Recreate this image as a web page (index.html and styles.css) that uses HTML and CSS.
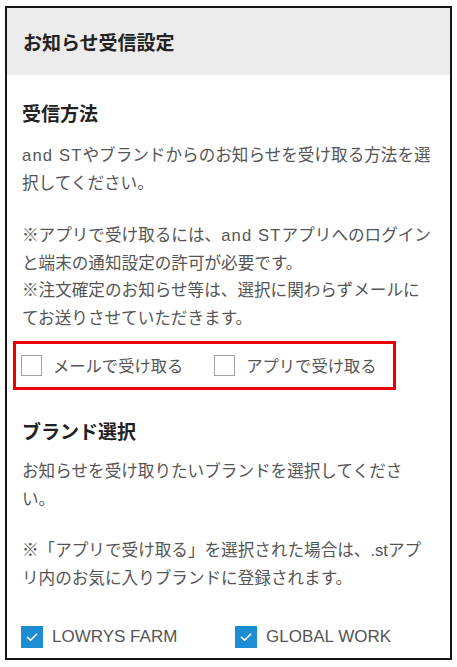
FILE: index.html
```html
<!DOCTYPE html>
<html lang="ja">
<head>
<meta charset="utf-8">
<title>お知らせ受信設定</title>
<link rel="stylesheet" href="styles.css">
</head>
<body>
<div class="frame">
  <header class="head">
    <h1 class="head-title">お知らせ受信設定</h1>
  </header>
  <div class="content">
    <section class="section">
      <h2 class="sec-title">受信方法</h2>
      <p class="text"><span class="en">and ST</span>やブランドからのお知らせを受け取る方法を選択してください。</p>
      <p class="text note">※アプリで受け取るには、<span class="en">and ST</span>アプリへのログインと端末の通知設定の許可が必要です。<br>※注文確定のお知らせ等は、選択に関わらずメールにてお送りさせていただきます。</p>
      <div class="method-row">
        <label class="check-item">
          <span class="box"></span>
          <span class="check-label">メールで受け取る</span>
        </label>
        <label class="check-item">
          <span class="box"></span>
          <span class="check-label">アプリで受け取る</span>
        </label>
      </div>
    </section>
    <section class="section brand">
      <h2 class="sec-title">ブランド選択</h2>
      <p class="text">お知らせを受け取りたいブランドを選択してください。</p>
      <p class="text note">※「アプリで受け取る」を選択された場合は、.stアプリ内のお気に入りブランドに登録されます。</p>
      <div class="brand-grid">
        <label class="check-item">
          <span class="box checked"><svg viewBox="0 0 22 22" width="22" height="22"><path d="M6.5 11.3 L9.6 14.2 L15.6 8.2" fill="none" stroke="#fff" stroke-width="1.6" stroke-linecap="round" stroke-linejoin="round"/></svg></span>
          <span class="brand-label">LOWRYS FARM</span>
        </label>
        <label class="check-item">
          <span class="box checked"><svg viewBox="0 0 22 22" width="22" height="22"><path d="M6.5 11.3 L9.6 14.2 L15.6 8.2" fill="none" stroke="#fff" stroke-width="1.6" stroke-linecap="round" stroke-linejoin="round"/></svg></span>
          <span class="brand-label">GLOBAL WORK</span>
        </label>
      </div>
    </section>
  </div>
</div>
</body>
</html>
```

FILE: styles.css
```css
* { box-sizing: border-box; }
html, body { margin: 0; padding: 0; background: #fff; }
body {
  font-family: "Liberation Sans", "Noto Sans CJK JP", sans-serif;
  color: #555;
}
.frame {
  margin: 6px 0 0 5px;
  width: 447px;
  height: 654px;
  border: 2px solid #151515;
  overflow: hidden;
  background: #fff;
}
.head {
  height: 67px;
  background: #ececec;
  display: flex;
  align-items: center;
  padding: 5px 16px 0;
}
.head-title {
  margin: 0;
  font-size: 19px;
  font-weight: bold;
  color: #222;
  line-height: 28px;
}
.content {
  padding: 0 15px;
}
.sec-title {
  margin: 26px 0 0;
  font-size: 19px;
  font-weight: bold;
  color: #222;
  line-height: 28px;
}
.brand .sec-title { margin-top: 29px; }
.text {
  margin: 13px 0 0;
  width: 413px;
  font-size: 16.6px;
  line-height: 27.5px;
  color: #555;
}
.en {
  letter-spacing: 0.07em;
}
.brand .text { margin-top: 11px; }
.text.note { margin-top: 25px; }
.brand .text.note { margin-top: 24px; }
.method-row {
  margin: 9px 0 0 -9px;
  width: 383px;
  height: 49px;
  border: 3px solid #ee0000;
  display: flex;
  align-items: center;
  gap: 31px;
  padding-left: 5px;
}
.check-item {
  display: flex;
  align-items: center;
  gap: 11px;
}
.box {
  width: 21px;
  height: 21px;
  border: 1.5px solid #a3a3a3;
  background: #fff;
  flex: none;
  display: flex;
  align-items: center;
  justify-content: center;
}
.box.checked {
  border: none;
  background: #1c8dd3;
  width: 22px;
  height: 22px;
}
.check-label {
  font-size: 16.3px;
  color: #555;
  line-height: 24px;
}
.brand-grid {
  margin: 31px 0 0 -1px;
  display: grid;
  grid-template-columns: 214px 1fr;
  height: 28px;
  align-items: center;
}
.brand-label {
  font-size: 17px;
  color: #555;
  line-height: 24px;
}
.brand .check-item { gap: 9px; }
```
